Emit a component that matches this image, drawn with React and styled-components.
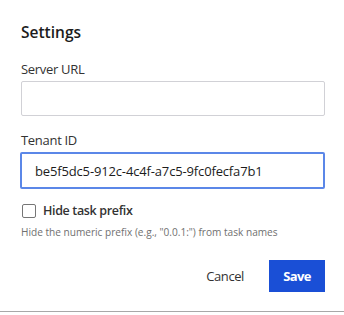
import React from "react";
import styled, { createGlobalStyle } from "styled-components";

/*
 * Styles
 */

const GlobalStyle = createGlobalStyle`
  html, body {
    margin: 0;
    padding: 0;
    background: #ffffff;
  }
  body {
    font-family: "Open Sans", "Noto Sans", sans-serif;
    color: #242424;
  }
`;

export const Dialog = styled.div`
  box-sizing: border-box;
  width: 344px;
  height: 312px;
  padding: 21px 19px 0 21px;
  border-bottom: 1px solid #a8a8a8;
  background: #ffffff;
`;

export const Title = styled.h2`
  margin: 0 0 17px;
  font-size: 15.5px;
  font-weight: 600;
  line-height: 22px;
  color: #1c1c1c;
`;

export const Field = styled.div`
  display: flex;
  flex-direction: column;
  margin-bottom: ${(p) => p.gap || 0}px;
`;

export const Label = styled.label`
  font-size: 13px;
  line-height: 18px;
  letter-spacing: -0.3px;
  margin-bottom: 3px;
  color: #333333;
`;

export const Input = styled.input`
  box-sizing: border-box;
  width: 304px;
  height: 35px;
  margin: 0;
  padding: 0 12px 0 13px;
  border: 1px solid #d1d1d6;
  border-radius: 2px;
  font-family: inherit;
  font-size: 13px;
  letter-spacing: -0.15px;
  color: #1c1c1c;
  outline: none;
  ${(p) =>
    p.focused &&
    `
    border: 2px solid #5b87e8;
    margin-left: -1px;
    width: 305px;
    height: 37px;
  `}
`;

export const CheckRow = styled.label`
  display: flex;
  align-items: center;
  gap: 7px;
  height: 20px;
  margin-top: 12px;
  font-size: 12.5px;
  line-height: 20px;
  letter-spacing: -0.35px;
  font-weight: 600;
  color: #333333;
`;

export const Box = styled.span`
  box-sizing: border-box;
  width: 14px;
  height: 14px;
  margin-left: 1px;
  border: 1px solid #767676;
  border-radius: 2px;
  background: #ffffff;
`;

export const Hint = styled.p`
  margin: 3px 0 0;
  font-size: 10.1px;
  line-height: 16px;
  color: #707070;
`;

export const Actions = styled.div`
  display: flex;
  justify-content: flex-end;
  align-items: center;
  gap: 25px;
  margin-top: 20px;
`;

export const Button = styled.button`
  height: 32px;
  padding: 0;
  width: ${(p) => (p.primary ? "56px" : "auto")};
  border: none;
  border-radius: 0;
  font-family: inherit;
  font-size: 13px;
  letter-spacing: ${(p) => (p.primary ? -0.6 : -0.4)}px;
  font-weight: ${(p) => (p.primary ? 700 : 400)};
  color: ${(p) => (p.primary ? "#ffffff" : "#333333")};
  background: ${(p) => (p.primary ? "#1a4fd6" : "transparent")};
  cursor: pointer;
`;

/*
 * Component
 */

export default function App() {
  return (
    <>
      <GlobalStyle />
      <Dialog>
        <Title>Settings</Title>
        <Field gap={15}>
          <Label>Server URL</Label>
          <Input />
        </Field>
        <Field>
          <Label>Tenant ID</Label>
          <Input focused defaultValue="be5f5dc5-912c-4c4f-a7c5-9fc0fecfa7b1" />
        </Field>
        <CheckRow>
          <Box />
          Hide task prefix
        </CheckRow>
        <Hint>Hide the numeric prefix (e.g., "0.0.1:") from task names</Hint>
        <Actions>
          <Button>Cancel</Button>
          <Button primary>Save</Button>
        </Actions>
      </Dialog>
    </>
  );
}
